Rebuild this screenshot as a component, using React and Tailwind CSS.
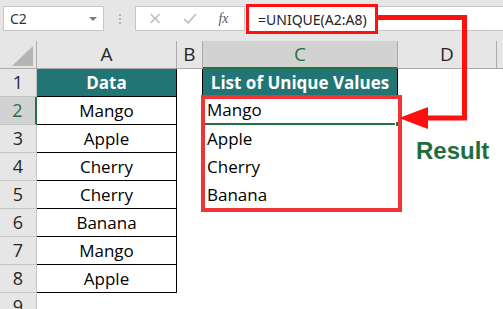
import React from 'react';

const FONT = { fontFamily: '"Open Sans", "Noto Sans", sans-serif' };
const UI_FONT = { fontFamily: '"Noto Sans", "Open Sans", sans-serif' };

const dataRows = ['Mango', 'Apple', 'Cherry', 'Cherry', 'Banana', 'Mango', 'Apple'];
const unique = ['Mango', 'Apple', 'Cherry', 'Banana'];

function RowHeader({ n, selected }) {
  return (
    <div
      className={`h-[28px] flex items-center justify-center border-b border-r border-[#c4c4c4] text-[18px] ${
        selected ? 'bg-[#d2d2d2] text-[#217346] border-r-2 border-r-[#217346]' : 'bg-[#e6e6e6] text-[#262626]'
      }`}
    >
      {n}
    </div>
  );
}

function ColHeader({ label, selected }) {
  return (
    <div
      className={`h-[28px] flex items-center justify-center text-[19px] border-r border-r-[#ababab] ${
        selected ? 'bg-[#d2d2d2] text-[#217346] border-b-2 border-b-[#217346]' : 'bg-[#e6e6e6] text-[#262626] border-b border-b-[#ababab]'
      }`}
    >
      {label}
    </div>
  );
}

export default function App() {
  return (
    <div className="relative w-[503px] h-[309px] overflow-hidden bg-white select-none" style={FONT}>
      {/* formula bar */}
      <div className="h-[41px] bg-[#e6e6e6] flex items-start pt-[6px] pl-[3px]" style={UI_FONT}>
        <div className="w-[101px] h-[25px] bg-white border border-[#c6c6c6] flex items-center justify-between px-[6px]">
          <span className="text-[14px] text-[#333]">C2</span>
          <span className="w-0 h-0 border-l-[4px] border-r-[4px] border-t-[4px] border-l-transparent border-r-transparent border-t-[#7a7a7a]" />
        </div>
        <div className="w-[31px] h-[25px] flex flex-col items-center justify-center gap-[2px]">
          <span className="w-[2px] h-[2px] bg-[#b0b0b0]" />
          <span className="w-[2px] h-[2px] bg-[#b0b0b0]" />
          <span className="w-[2px] h-[2px] bg-[#b0b0b0]" />
        </div>
        <div className="w-[110px] h-[25px] bg-white border border-[#c6c6c6] flex items-center">
          <svg width="110" height="23" viewBox="0 0 110 23">
            <path d="M15 7 L24 16 M24 7 L15 16" stroke="#c2c2c2" strokeWidth="1.6" fill="none" />
            <path d="M49 12 L53 16 L61 7" stroke="#c2c2c2" strokeWidth="1.8" fill="none" />
            <text x="84" y="16" fontFamily="Liberation Serif, serif" fontStyle="italic" fontSize="14" fill="#555">fx</text>
          </svg>
        </div>
        <div className="flex-1 h-[25px] bg-white border-y border-[#c6c6c6] ml-[2px]" />
      </div>

      {/* sheet grid */}
      <div className="grid grid-cols-[37px_140px_26px_195px_99px_1fr]">
        {/* select-all corner */}
        <div className="h-[28px] bg-[#e6e6e6] border-b border-r border-[#ababab] flex items-end justify-end pr-[3px] pb-[2px]">
          <svg width="21" height="20" viewBox="0 0 21 20">
            <polygon points="21,0 21,20 0,20" fill="#b4b4b4" />
          </svg>
        </div>
        <ColHeader label="A" />
        <ColHeader label="B" />
        <ColHeader label="C" selected />
        <ColHeader label="D" />
        <div className="h-[28px] bg-[#e6e6e6] border-b border-[#ababab]" />

        {/* row 1 */}
        <RowHeader n={1} />
        <div className="h-[28px] bg-[#217575] border-r border-b border-black flex items-center justify-center text-white font-bold text-[17px]">Data</div>
        <div className="h-[28px]" />
        <div className="h-[28px] bg-[#217575] border-l border-r border-b border-black flex items-center justify-center text-white font-bold text-[17px] -ml-px">List of Unique Values</div>
        <div className="h-[28px]" />
        <div className="h-[28px]" />

        {/* rows 2-8 */}
        {dataRows.map((fruit, i) => {
          const row = i + 2;
          const u = unique[i];
          return (
            <React.Fragment key={row}>
              <RowHeader n={row} selected={row === 2} />
              <div className="h-[28px] border-r border-b border-black flex items-center justify-center text-[17px] text-black">{fruit}</div>
              <div className="h-[28px]" />
              <div className={`h-[28px] flex items-center pl-[4px] text-[17px] text-black relative ${row === 2 ? 'border-b-2 border-[#217346]' : ''}`}>
                {u || ''}
                {row === 2 && <span className="absolute right-[-2px] bottom-[-4px] w-[5px] h-[6px] bg-[#217346] border border-white" />}
              </div>
              <div className="h-[28px]" />
              <div className="h-[28px]" />
            </React.Fragment>
          );
        })}

        {/* row 9 */}
        <RowHeader n={9} />
        <div className="h-[28px]" />
        <div className="h-[28px]" />
        <div className="h-[28px]" />
        <div className="h-[28px]" />
        <div className="h-[28px]" />
      </div>

      {/* annotations */}
      <div className="absolute left-[246px] top-[4px] w-[132px] h-[30px] border-[3px] border-[#ff1010] bg-white flex items-center pl-[9px] text-[14px] text-[#222]" style={UI_FONT}>
        =UNIQUE(A2:A8)
      </div>
      <div className="absolute left-[201px] top-[95px] w-[201px] h-[117px] border-[4px] border-[#ee3636] pointer-events-none" />
      <svg className="absolute left-0 top-0 pointer-events-none" width="503" height="309" viewBox="0 0 503 309">
        <path d="M378 17.5 L464.5 17.5 L464.5 118 L426 118" stroke="#ff1010" strokeWidth="5" fill="none" />
        <polygon points="428,107 399,118 428,129" fill="#ff1010" />
      </svg>
      <div className="absolute left-[416px] top-[133px] text-[24px] font-bold text-[#1e6e3c]" style={{ fontFamily: '"Liberation Sans", Arial, sans-serif' }}>
        Result
      </div>
    </div>
  );
}
